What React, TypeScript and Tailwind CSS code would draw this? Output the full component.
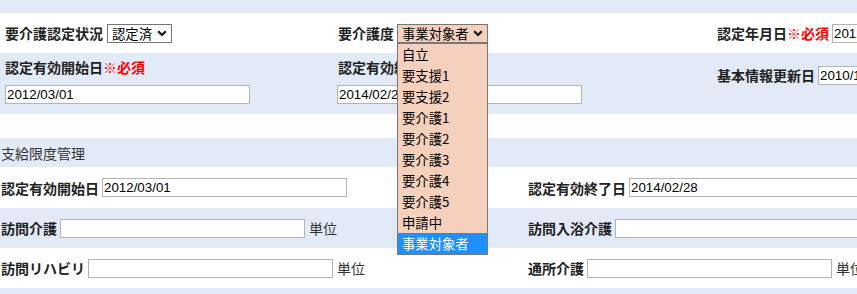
import React from 'react';

const jp = "font-['Noto_Sans_CJK_JP',sans-serif]";
const num = "font-['Liberation_Sans','Noto_Sans_CJK_JP',sans-serif]";

const careLevels = ['自立', '要支援1', '要支援2', '要介護1', '要介護2', '要介護3', '要介護4', '要介護5', '申請中', '事業対象者'];

const Chevron: React.FC = () => (
  <svg width="10" height="7" viewBox="0 0 10 7" className="shrink-0">
    <path d="M1.2 1.3 L5 5 L8.8 1.3" fill="none" stroke="#111" strokeWidth={2.2} />
  </svg>
);

const Label: React.FC<{ text: string; required?: boolean }> = ({ text, required }) => (
  <span className={`${jp} block shrink-0 text-[14px] leading-[20px] font-bold text-[#222] whitespace-nowrap`}>
    {text}
    {required && <span className="text-[#ff0000]">※必須</span>}
  </span>
);

const TextBox: React.FC<{ value?: string }> = ({ value = '' }) => (
  <div
    className={`${num} w-[245px] h-[19px] shrink-0 border border-[#b4b4b4] bg-white px-[1px] text-[13.33px] leading-[17px] text-black whitespace-nowrap overflow-hidden`}
  >
    {value}
  </div>
);

const Unit: React.FC = () => (
  <span className={`${jp} shrink-0 whitespace-nowrap text-[14px] leading-[20px] text-[#333] ml-[1px]`}>単位</span>
);

const Field: React.FC<{ label: string; value?: string; unit?: boolean }> = ({ label, value, unit }) => (
  <div className="flex items-center gap-[3px] whitespace-nowrap">
    <Label text={label} />
    <TextBox value={value} />
    {unit && <Unit />}
  </div>
);

const App: React.FC = () => {
  return (
    <div className="w-[857px] h-[294px] overflow-hidden bg-white">
      {/* top band */}
      <div className="h-[13px] bg-[#e3eaf7]" />

      {/* row 1 */}
      <div className="h-[40px] grid grid-cols-[333px_379px_max-content] pl-[5px] items-center">
        <div className="flex items-center gap-[4px]">
          <Label text="要介護認定状況" />
          <div className={`${jp} w-[65px] h-[19px] border border-[#767676] bg-white flex items-center justify-between pl-[4px] pr-[4px] text-[13.33px] leading-[17px] text-black`}>
            <span>認定済</span>
            <Chevron />
          </div>
        </div>
        <div className="flex items-center gap-[3px]">
          <Label text="要介護度" />
          <div className="relative">
            <div className={`${jp} w-[91px] h-[19px] border border-[#767676] bg-[#f5d1bd] flex items-center justify-between pl-[4px] pr-[4px] text-[13.33px] leading-[17px] text-black`}>
              <span>事業対象者</span>
              <Chevron />
            </div>
            <ul className={`${jp} absolute left-0 top-[19px] z-10 w-[91px] border border-[#767676] bg-[#f5d1bd] text-[13.33px]`}>
              {careLevels.map((lv) => (
                <li
                  key={lv}
                  className={
                    lv === '事業対象者'
                      ? 'h-[21px] leading-[21px] pl-[4px] bg-[#1e90ff] text-white'
                      : 'h-[21px] leading-[21px] pl-[4px] text-black'
                  }
                >
                  {lv}
                </li>
              ))}
            </ul>
          </div>
        </div>
        <div className="flex items-center gap-[3px]">
          <Label text="認定年月日" required />
          <TextBox value="2012/03/01" />
        </div>
      </div>

      {/* row 2 */}
      <div className="h-[61px] bg-[#e3eaf7] grid grid-cols-[333px_379px_max-content] pl-[5px]">
        <div className="flex flex-col items-start pt-[4px] gap-[8px]">
          <Label text="認定有効開始日" required />
          <TextBox value="2012/03/01" />
        </div>
        <div className="flex flex-col items-start pt-[4px] gap-[8px] -ml-[1px]">
          <div className="pl-[1px]">
            <Label text="認定有効終了日" required />
          </div>
          <TextBox value="2014/02/28" />
        </div>
        <div className="flex items-center gap-[3px] pt-[12px] self-start">
          <Label text="基本情報更新日" />
          <TextBox value="2010/10/01" />
        </div>
      </div>

      <div className="h-[24px]" />

      {/* 支給限度管理 */}
      <div className="h-[29px] bg-[#e3eaf7] flex items-center pl-[1px]">
        <span className={`${jp} text-[14px] leading-[20px] text-[#333]`}>支給限度管理</span>
      </div>

      <div className="h-[41px] grid grid-cols-[527px_max-content] items-center pl-[1px]">
        <Field label="認定有効開始日" value="2012/03/01" />
        <Field label="認定有効終了日" value="2014/02/28" />
      </div>
      <div className="h-[40px] bg-[#e3eaf7] grid grid-cols-[527px_max-content] items-center pl-[1px]">
        <Field label="訪問介護" unit />
        <Field label="訪問入浴介護" unit />
      </div>
      <div className="h-[40px] grid grid-cols-[527px_max-content] items-center pl-[1px]">
        <Field label="訪問リハビリ" unit />
        <Field label="通所介護" unit />
      </div>
      <div className="h-[40px] bg-[#e3eaf7]" />
    </div>
  );
};

export default App;
